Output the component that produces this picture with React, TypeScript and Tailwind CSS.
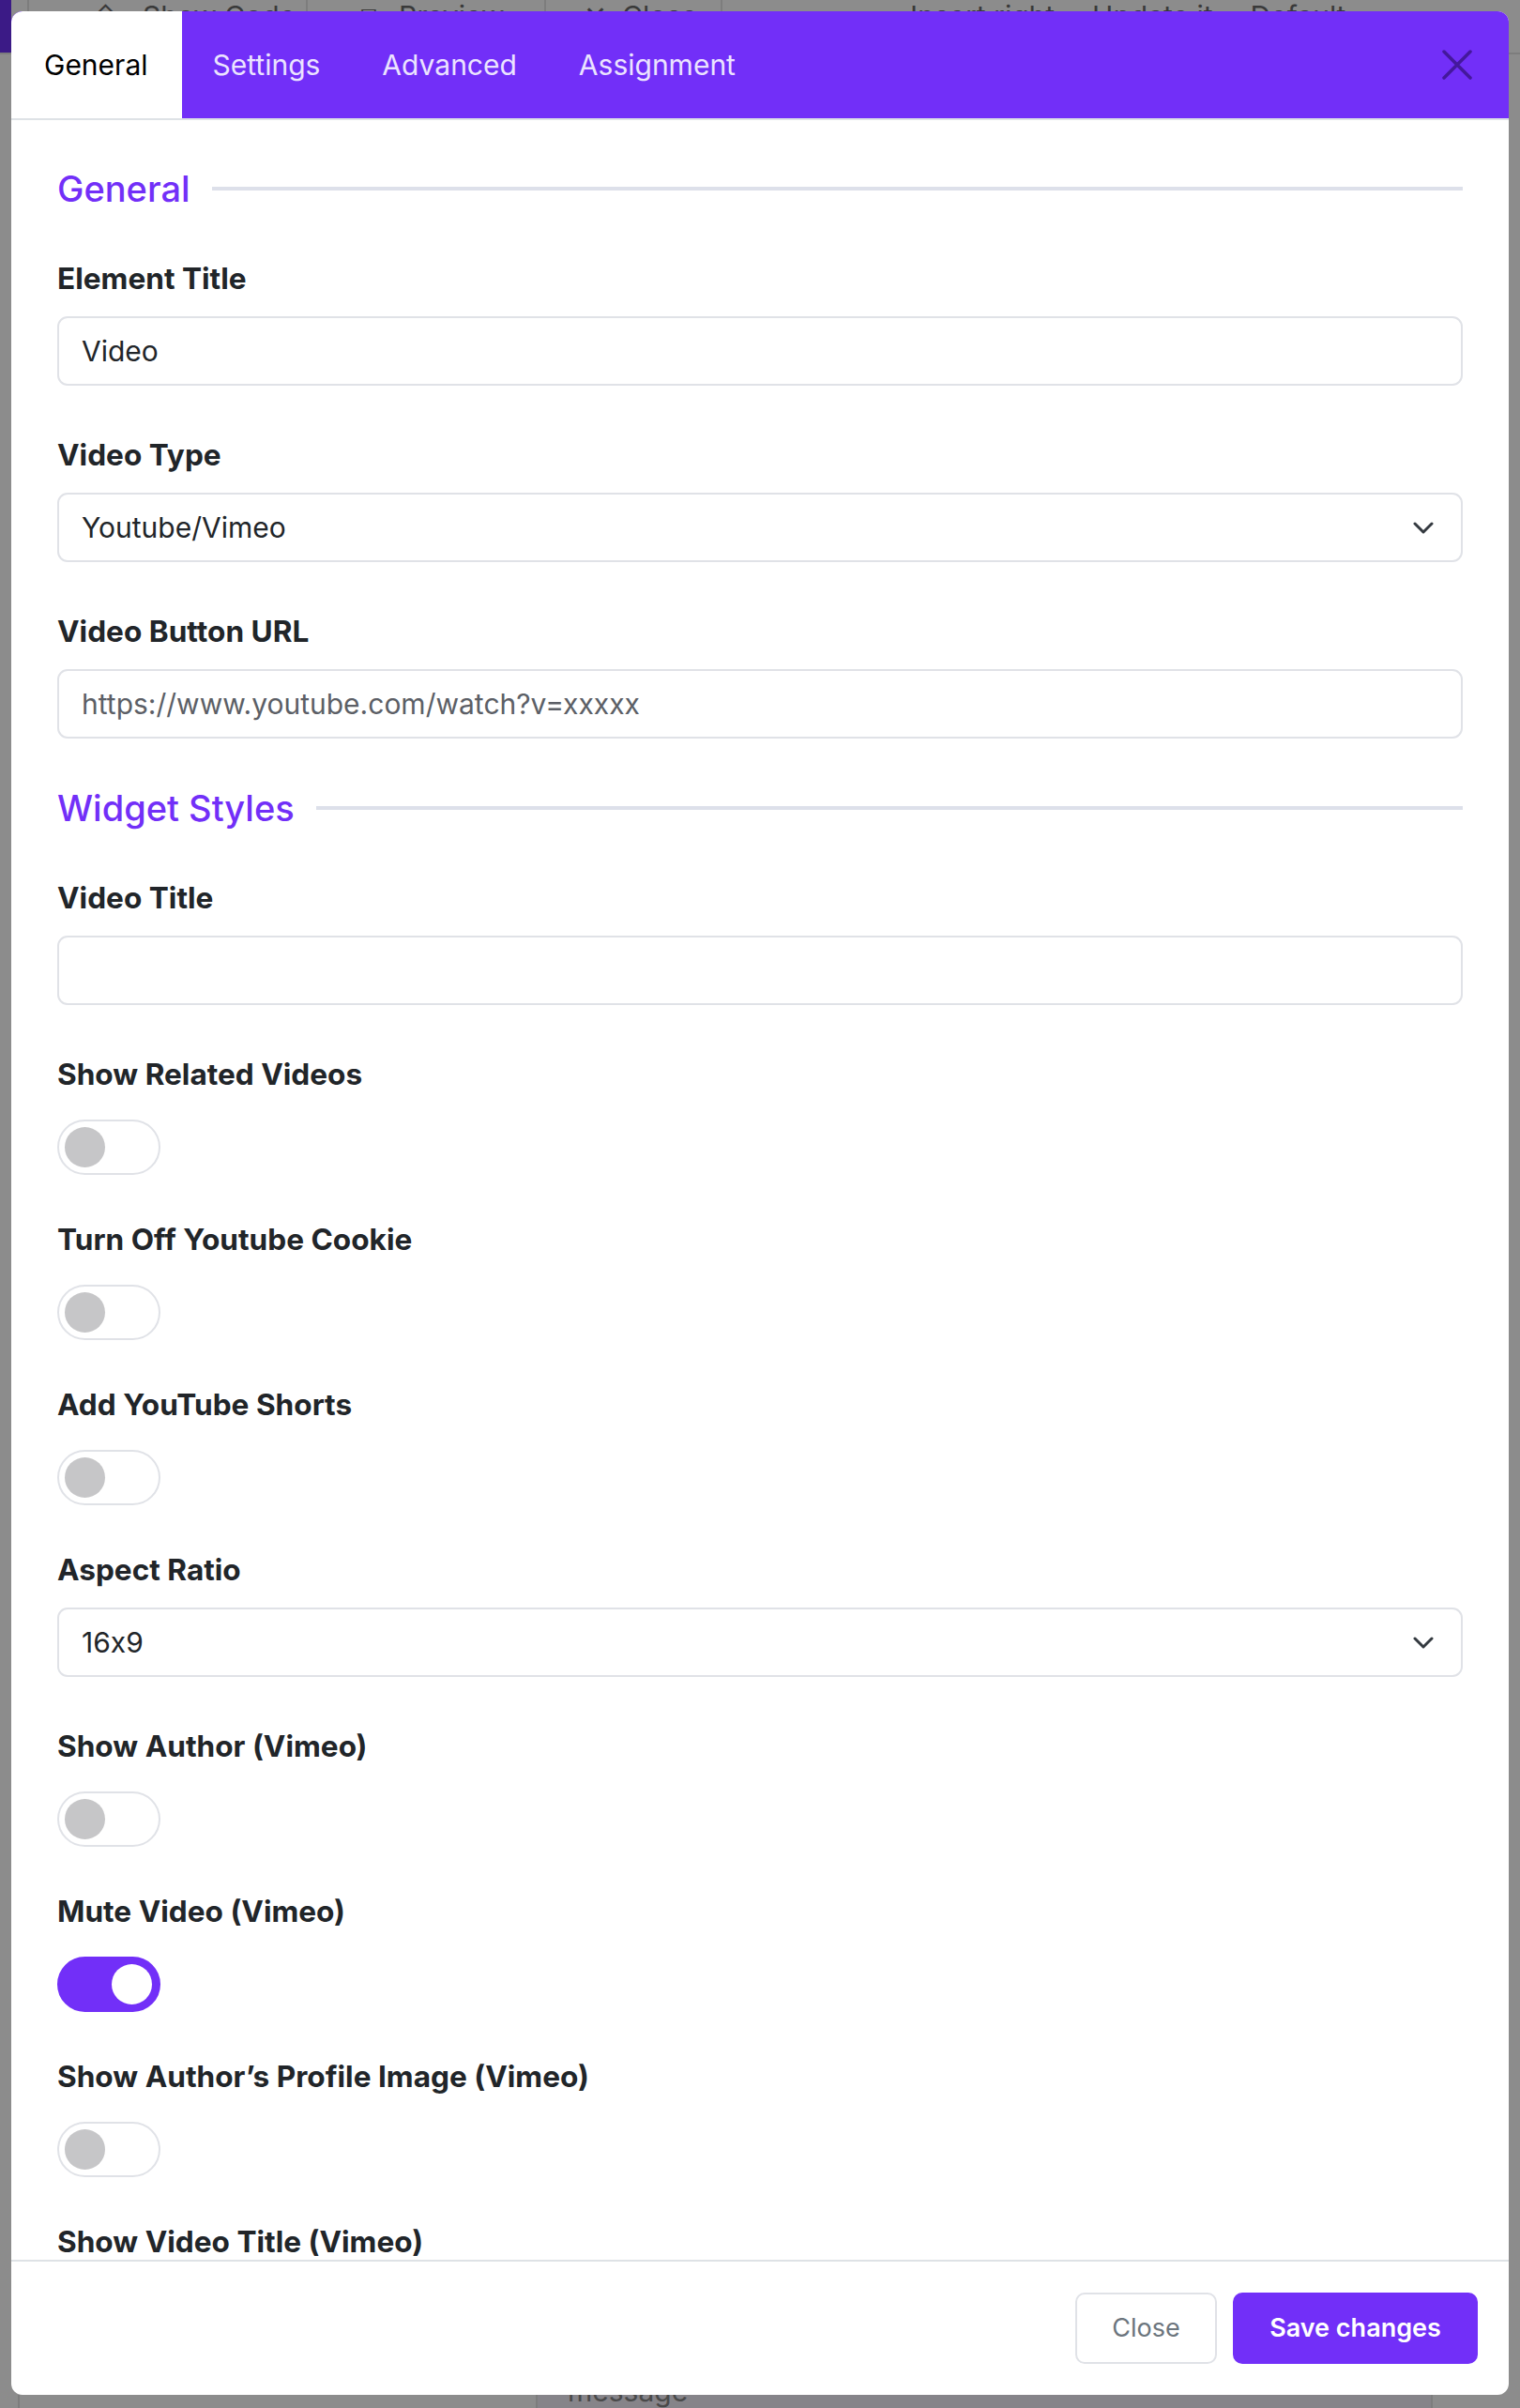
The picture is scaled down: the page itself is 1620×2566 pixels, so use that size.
import React from 'react'

const Label = ({ children }: { children: React.ReactNode }) => (
  <div className="h-[45px] text-[31.6px] font-bold leading-[45px] text-[#212529]">{children}</div>
)

const SectionTitle = ({ children }: { children: React.ReactNode }) => (
  <div className="mb-[50px] flex h-[46px] items-center">
    <span className="text-[38px] font-medium leading-[46px] text-[#722ff8]">{children}</span>
    <span className="ml-[23px] h-[4px] flex-1 bg-[#dde0ea]" />
  </div>
)

const TextField = ({ label, value, muted }: { label: string; value?: string; muted?: boolean }) => (
  <div className="mb-[51px]">
    <Label>{label}</Label>
    <div
      className={`mt-[18px] flex h-[74px] items-center rounded-[11px] border-2 border-[#e0e2e7] px-[24px] text-[30px] ${
        muted ? 'text-[#5c5f66]' : 'text-[#212529]'
      }`}
    >
      {value}
    </div>
  </div>
)

const SelectField = ({ label, value }: { label: string; value: string }) => (
  <div className="mb-[51px]">
    <Label>{label}</Label>
    <div className="mt-[18px] flex h-[74px] items-center justify-between rounded-[11px] border-2 border-[#e0e2e7] pl-[24px] pr-[29px] text-[30px] text-[#212529]">
      <span>{value}</span>
      <svg width="22" height="13" viewBox="0 0 22 13" fill="none">
        <path d="M2 2l9 9 9-9" stroke="#343a40" strokeWidth="3" strokeLinecap="round" strokeLinejoin="round" />
      </svg>
    </div>
  </div>
)

const Toggle = ({ on = false }: { on?: boolean }) => (
  <div
    className={`flex h-[59px] w-[110px] items-center rounded-full border-2 px-[6px] ${
      on ? 'justify-end border-[#722ff8] bg-[#722ff8] pr-[7px]' : 'justify-start border-[#e0e2e7] bg-white'
    }`}
  >
    <span className={`h-[43px] w-[43px] rounded-full ${on ? 'bg-white' : 'bg-[#c6c6c8]'}`} />
  </div>
)

const ToggleField = ({ label, on }: { label: string; on?: boolean }) => (
  <div className="mb-[46px]">
    <Label>{label}</Label>
    <div className="mt-[26px]">
      <Toggle on={on} />
    </div>
  </div>
)

const tabs = ['General', 'Settings', 'Advanced', 'Assignment']

export default function App() {
  return (
    <div className="relative h-[2566px] w-[1620px] overflow-hidden bg-[#8c8c8c] font-['Inter',sans-serif] [font-feature-settings:'calt'_0]">
      {/* page behind the overlay */}
      <div className="flex h-[58px] border-b-2 border-[#7d7d7d] text-[30px] text-[#3a3a3a]">
        <div className="w-[12px] bg-[#3b1a86]" />
        <div className="w-[19px] border-r-2 border-[#7d7d7d]" />
        <div className="flex w-[297px] items-start gap-[24px] border-r-2 border-[#7d7d7d] pl-[66px] pt-[2px] leading-[30px]">
          <span>⇪</span>
          <span>Show Code</span>
        </div>
        <div className="flex w-[254px] items-start gap-[20px] border-r-2 border-[#7d7d7d] pl-[56px] pt-[2px] leading-[30px]">
          <span>⧉</span>
          <span>Preview</span>
        </div>
        <div className="flex w-[188px] items-start gap-[16px] border-r-2 border-[#7d7d7d] pl-[40px] pt-[2px] leading-[30px]">
          <span>✕</span>
          <span>Close</span>
        </div>
        <div className="flex flex-1 items-start gap-[40px] pl-[200px] pt-[2px] leading-[30px]">
          <span>Insert right</span>
          <span>Update it</span>
          <span>Default</span>
        </div>
      </div>
      <div className="absolute bottom-0 left-0 flex h-[30px] w-full">
        <div className="w-[19px]" />
        <div className="w-[552px] border-l-2 border-[#7d7d7d]" />
        <div className="w-[956px] border-x-2 border-[#7d7d7d] bg-[#868489] pl-[32px] text-[30px] leading-[24px] text-[#4a4a4a]">
          message
        </div>
      </div>

      {/* modal */}
      <div className="absolute left-[12px] top-[12px] flex h-[2540px] w-[1596px] flex-col overflow-hidden rounded-[12px] bg-white">
        <div className="flex h-[116px] shrink-0 items-stretch border-b-2 border-[#dee2e6] bg-[#722ff8]">
          {tabs.map((t, i) => (
            <div
              key={t}
              className={`flex items-center text-[30px] ${
                i === 0 ? 'rounded-tl-[12px] bg-white pl-[35px] pr-[36px] text-black' : 'px-[33px] text-[#ebe3ff]'
              }`}
            >
              {t}
            </div>
          ))}
          <div className="flex-1" />
          <div className="flex items-center pr-[39px]">
            <svg width="32" height="32" viewBox="0 0 32 32" fill="none">
              <path d="M2 2l28 28M30 2L2 30" stroke="#44189c" strokeWidth="3.5" strokeLinecap="round" />
            </svg>
          </div>
        </div>

        <div className="flex-1 overflow-hidden px-[49px] pt-[50px]">
          <SectionTitle>General</SectionTitle>
          <TextField label="Element Title" value="Video" />
          <SelectField label="Video Type" value="Youtube/Vimeo" />
          <TextField label="Video Button URL" value="https://www.youtube.com/watch?v=xxxxx" muted />

          <SectionTitle>Widget Styles</SectionTitle>
          <TextField label="Video Title" />
          <ToggleField label="Show Related Videos" />
          <ToggleField label="Turn Off Youtube Cookie" />
          <ToggleField label="Add YouTube Shorts" />
          <SelectField label="Aspect Ratio" value="16x9" />
          <ToggleField label="Show Author (Vimeo)" />
          <ToggleField label="Mute Video (Vimeo)" on />
          <ToggleField label="Show Author’s Profile Image (Vimeo)" />
          <ToggleField label="Show Video Title (Vimeo)" />
          <ToggleField label="Show Video Portrait (Vimeo)" />
        </div>

        <div className="flex h-[144px] shrink-0 items-center justify-end gap-[17px] border-t-2 border-[#dee2e6] px-[33px]">
          <button className="h-[76px] w-[151px] rounded-[10px] border-2 border-[#e0e2e7] bg-white text-[27px] text-[#6c757d]">
            Close
          </button>
          <button className="h-[76px] w-[261px] rounded-[10px] bg-[#722ff8] text-[27px] font-semibold text-white">
            Save changes
          </button>
        </div>
      </div>
    </div>
  )
}
